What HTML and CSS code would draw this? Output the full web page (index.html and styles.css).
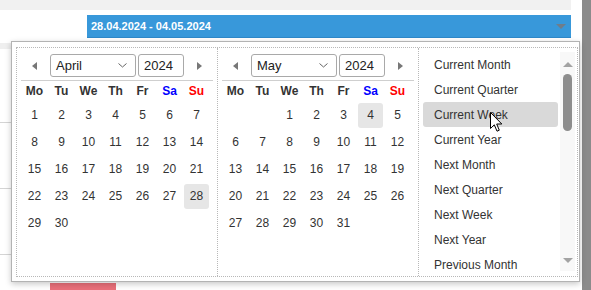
FILE: index.html
```html
<!DOCTYPE html>
<html>
<head>
<meta charset="utf-8">
<link rel="stylesheet" href="styles.css">
</head>
<body>
<div class="page">
  <div class="main">
    <div class="topband"></div>
    <div class="toolbar">
      <div class="range">
        <span class="range-text">28.04.2024 - 04.05.2024</span>
        <span class="range-caret"></span>
      </div>
    </div>
    <div class="sheet">
      <div class="band"></div>
      <div class="row row-first"></div>
      <div class="row"></div>
      <div class="row"></div>
      <div class="spacer"></div>
      <div class="pink"></div>
    </div>
  </div>
  <div class="gutter"></div>
  <div class="pagebar"></div>

  <div class="popup">
    <div class="dp">
      <div class="month">
        <div class="nav">
          <div class="navbtn"><span class="tri-left"></span></div>
          <div class="sel">April<svg class="chev" width="9" height="5" viewBox="0 0 9 5"><polyline points="0.5,0.5 4.5,4 8.5,0.5" fill="none" stroke="#666" stroke-width="1"/></svg></div>
          <div class="year">2024</div>
          <div class="navbtn"><span class="tri-right"></span></div>
        </div>
        <div class="grid">
          <div class="hd">Mo</div><div class="hd">Tu</div><div class="hd">We</div><div class="hd">Th</div><div class="hd">Fr</div><div class="hd sa">Sa</div><div class="hd su">Su</div>
          <div class="d">1</div><div class="d">2</div><div class="d">3</div><div class="d">4</div><div class="d">5</div><div class="d">6</div><div class="d">7</div>
          <div class="d">8</div><div class="d">9</div><div class="d">10</div><div class="d">11</div><div class="d">12</div><div class="d">13</div><div class="d">14</div>
          <div class="d">15</div><div class="d">16</div><div class="d">17</div><div class="d">18</div><div class="d">19</div><div class="d">20</div><div class="d">21</div>
          <div class="d">22</div><div class="d">23</div><div class="d">24</div><div class="d">25</div><div class="d">26</div><div class="d">27</div><div class="d sel-day">28</div>
          <div class="d">29</div><div class="d">30</div>
        </div>
      </div>
      <div class="month">
        <div class="nav">
          <div class="navbtn"><span class="tri-left"></span></div>
          <div class="sel">May<svg class="chev" width="9" height="5" viewBox="0 0 9 5"><polyline points="0.5,0.5 4.5,4 8.5,0.5" fill="none" stroke="#666" stroke-width="1"/></svg></div>
          <div class="year">2024</div>
          <div class="navbtn"><span class="tri-right"></span></div>
        </div>
        <div class="grid">
          <div class="hd">Mo</div><div class="hd">Tu</div><div class="hd">We</div><div class="hd">Th</div><div class="hd">Fr</div><div class="hd sa">Sa</div><div class="hd su">Su</div>
          <div class="d"></div><div class="d"></div><div class="d">1</div><div class="d">2</div><div class="d">3</div><div class="d sel-day">4</div><div class="d">5</div>
          <div class="d">6</div><div class="d">7</div><div class="d">8</div><div class="d">9</div><div class="d">10</div><div class="d">11</div><div class="d">12</div>
          <div class="d">13</div><div class="d">14</div><div class="d">15</div><div class="d">16</div><div class="d">17</div><div class="d">18</div><div class="d">19</div>
          <div class="d">20</div><div class="d">21</div><div class="d">22</div><div class="d">23</div><div class="d">24</div><div class="d">25</div><div class="d">26</div>
          <div class="d">27</div><div class="d">28</div><div class="d">29</div><div class="d">30</div><div class="d">31</div>
        </div>
      </div>
      <div class="presets">
        <div class="list">
          <div class="item">Current Month</div>
          <div class="item">Current Quarter</div>
          <div class="item hover">Current Week</div>
          <div class="item">Current Year</div>
          <div class="item">Next Month</div>
          <div class="item">Next Quarter</div>
          <div class="item">Next Week</div>
          <div class="item">Next Year</div>
          <div class="item">Previous Month</div>
        </div>
        <div class="scrollbar">
          <span class="sb-up"></span>
          <span class="sb-thumb"></span>
          <span class="sb-fill"></span>
          <span class="sb-down"></span>
        </div>
      </div>
    </div>
  </div>

  <svg class="cursor" width="13" height="21" viewBox="0 0 13 21"><path d="M0.5 0.5 L0.5 16.5 L4.3 12.8 L7 19.2 L9.3 18.2 L6.7 12 L11.8 12 Z" fill="#fff" stroke="#000" stroke-width="1" stroke-linejoin="miter"/></svg>
</div>
</body>
</html>
```

FILE: styles.css
```css
* { box-sizing: border-box; }
html, body { margin: 0; padding: 0; }
body {
  width: 591px;
  height: 290px;
  overflow: hidden;
  background: #fff;
  font-family: "Liberation Sans", Arial, sans-serif;
}
.page {
  position: relative;
  display: flex;
  width: 591px;
  height: 290px;
}
.main { width: 571px; display: flex; flex-direction: column; }
.gutter { width: 11px; }
.pagebar { width: 9px; background: #8b8b8b; }

.topband { height: 10px; background: #f1f1f1; }
.toolbar { padding: 5px 0 0 87px; }
.range {
  height: 23px;
  background: #3898da;
  border-bottom: 1px solid #2f89c9;
  display: flex;
  align-items: center;
  justify-content: space-between;
  padding: 0 3px 0 4px;
}
.range-text { color: #fff; font-size: 11px; font-weight: bold; }
.range-caret {
  width: 0; height: 0;
  border-left: 5px solid transparent;
  border-right: 5px solid transparent;
  border-top: 5px solid #6f7d8a;
  margin-right: 2px;
}

.sheet { display: flex; flex-direction: column; padding-top: 5px; }
.band { height: 6px; background: #efefef; }
.row { height: 66px; border-bottom: 1px solid #d4d4d4; }
.row-first { height: 74px; }
.spacer { height: 28px; }
.pink { width: 66px; height: 7px; margin-left: 50px; background: #e9707a; }

.popup {
  position: absolute;
  left: 11px;
  top: 41px;
  width: 569px;
  height: 241px;
  background: #fff;
  border: 1px solid #b3b3b3;
  box-shadow: 0 2px 6px rgba(0,0,0,0.22);
  padding: 5px 1px 4px 4px;
}
.dp {
  height: 230px;
  border: 1px dotted #b8b8b8;
  display: flex;
}
.month {
  width: 201px;
  border-right: 1px dotted #b8b8b8;
  padding: 6px 4px 0 4px;
}
.nav {
  display: flex;
  gap: 2px;
  height: 23px;
  margin-bottom: 3px;
  align-items: center;
}
.navbtn { width: 27px; height: 23px; display: flex; align-items: center; justify-content: center; }
.tri-left {
  width: 0; height: 0;
  border-top: 4px solid transparent;
  border-bottom: 4px solid transparent;
  border-right: 5px solid #777;
}
.tri-right {
  width: 0; height: 0;
  border-top: 4px solid transparent;
  border-bottom: 4px solid transparent;
  border-left: 5px solid #777;
}
.sel, .year {
  height: 23px;
  border: 1px solid #a9a9a9;
  border-radius: 3px;
  font-size: 13px;
  color: #222;
  display: flex;
  align-items: center;
  padding-left: 5px;
}
.sel { width: 86px; justify-content: space-between; padding-right: 8px; }
.year { width: 46px; }
.chev { display: block; }

.grid {
  border-top: 1px solid #cfcfcf;
  display: grid;
  grid-template-columns: repeat(7, 27px);
  grid-auto-rows: 27px;
  grid-template-rows: 21px;
  padding-left: 0;
}
.hd {
  font-size: 12px;
  font-weight: bold;
  color: #333;
  text-align: center;
  line-height: 21px;
}
.sa { color: #0000ff; }
.su { color: #ff0000; }
.d {
  font-size: 12px;
  color: #333;
  text-align: center;
  line-height: 25px;
  margin: 1px;
  border-radius: 3px;
}
.sel-day { background: #e6e6e6; }

.presets {
  flex: 1;
  display: flex;
  gap: 2px;
  padding: 4px 2px 0 4px;
}
.list {
  width: 135px;
  height: 219px;
  overflow: hidden;
}
.item {
  height: 25px;
  line-height: 27px;
  padding-left: 11px;
  font-size: 12px;
  color: #333;
  border-radius: 3px;
  white-space: nowrap;
}
.item.hover { background: #d9d9d9; }
.scrollbar {
  width: 15px;
  height: 219px;
  background: #f8f8f8;
  display: flex;
  flex-direction: column;
  align-items: center;
  padding: 10px 0 8px 0;
}
.sb-up {
  width: 0; height: 0;
  border-left: 5px solid transparent;
  border-right: 5px solid transparent;
  border-bottom: 5px solid #a3a3a3;
}
.sb-thumb {
  width: 9px;
  height: 57px;
  margin-top: 7px;
  background: #8d8d8d;
  border-radius: 5px;
}
.sb-fill { flex: 1; }
.sb-down {
  width: 0; height: 0;
  border-left: 5px solid transparent;
  border-right: 5px solid transparent;
  border-top: 5px solid #a3a3a3;
}

.cursor {
  position: absolute;
  left: 490px;
  top: 112px;
}
```
